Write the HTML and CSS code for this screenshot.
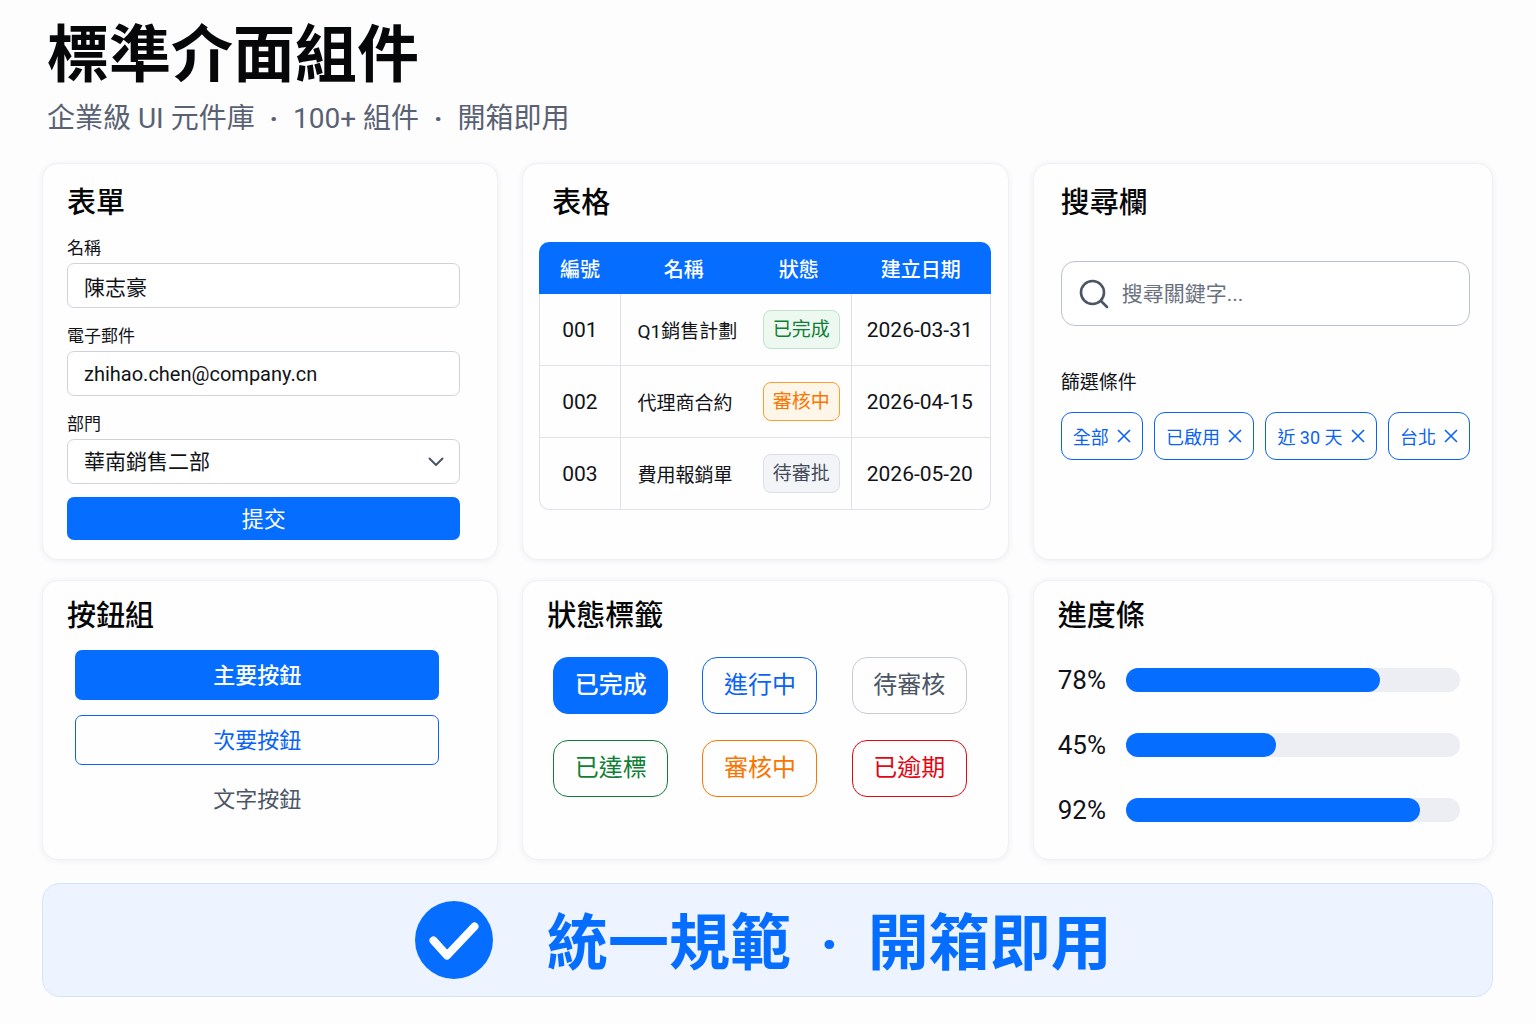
FILE: index.html
```html
<!DOCTYPE html>
<html lang="zh-Hant">
<head>
    <meta charset="UTF-8">
    <meta name="viewport" content="width=device-width, initial-scale=1.0">
    <title>標準介面組件</title>
    <link rel="stylesheet" href="styles.css">
</head>
<body>
    <header class="page-header">
        <h1>標準介面組件</h1>
        <p>企業級 UI 元件庫 <span class="dot">·</span> 100+ 組件 <span class="dot">·</span> 開箱即用</p>
    </header>

    <main class="grid">
        <section class="card">
            <h2>表單</h2>
            <form class="form">
                <div class="field">
                    <label for="name">名稱</label>
                    <input type="text" id="name" value="陳志豪">
                </div>
                <div class="field">
                    <label for="email">電子郵件</label>
                    <input type="email" id="email" value="zhihao.chen@company.cn">
                </div>
                <div class="field">
                    <label for="dept">部門</label>
                    <div class="select">
                        <select id="dept">
                            <option>華南銷售二部</option>
                        </select>
                        <svg width="16" height="10" viewBox="0 0 16 10" fill="none" stroke="#4b5565" stroke-width="2" stroke-linecap="round" stroke-linejoin="round"><path d="M1.5 1.5 8 8l6.5-6.5"/></svg>
                    </div>
                </div>
                <button type="button" class="btn btn-primary btn-submit">提交</button>
            </form>
        </section>

        <section class="card card-table">
            <h2>表格</h2>
            <table>
                <thead>
                    <tr>
                        <th class="col-id">編號</th>
                        <th class="col-name">名稱</th>
                        <th class="col-status">狀態</th>
                        <th class="col-date">建立日期</th>
                    </tr>
                </thead>
                <tbody>
                    <tr>
                        <td>001</td>
                        <td>Q1銷售計劃</td>
                        <td><span class="badge badge-green">已完成</span></td>
                        <td>2026-03-31</td>
                    </tr>
                    <tr>
                        <td>002</td>
                        <td>代理商合約</td>
                        <td><span class="badge badge-orange">審核中</span></td>
                        <td>2026-04-15</td>
                    </tr>
                    <tr>
                        <td>003</td>
                        <td>費用報銷單</td>
                        <td><span class="badge badge-gray">待審批</span></td>
                        <td>2026-05-20</td>
                    </tr>
                </tbody>
            </table>
        </section>

        <section class="card card-search">
            <h2>搜尋欄</h2>
            <label class="search">
                <svg width="30" height="30" viewBox="0 0 30 30" fill="none" stroke="#4b5565" stroke-width="2.6" stroke-linecap="round"><circle cx="13.5" cy="13.5" r="11.5"/><path d="m22 22 6 6"/></svg>
                <input type="search" placeholder="搜尋關鍵字..." aria-label="搜尋關鍵字">
            </label>
            <h3>篩選條件</h3>
            <div class="chips">
                <button type="button" class="chip">全部 <svg viewBox="0 0 14 14"><path d="m1 1 12 12M13 1 1 13"/></svg></button>
                <button type="button" class="chip">已啟用 <svg viewBox="0 0 14 14"><path d="m1 1 12 12M13 1 1 13"/></svg></button>
                <button type="button" class="chip">近 30 天 <svg viewBox="0 0 14 14"><path d="m1 1 12 12M13 1 1 13"/></svg></button>
                <button type="button" class="chip">台北 <svg viewBox="0 0 14 14"><path d="m1 1 12 12M13 1 1 13"/></svg></button>
            </div>
        </section>

        <section class="card card-low">
            <h2>按鈕組</h2>
            <div class="buttons">
                <button type="button" class="btn btn-primary">主要按鈕</button>
                <button type="button" class="btn btn-outline">次要按鈕</button>
                <button type="button" class="btn btn-text">文字按鈕</button>
            </div>
        </section>

        <section class="card card-low">
            <h2>狀態標籤</h2>
            <div class="tags">
                <span class="tag tag-solid">已完成</span>
                <span class="tag tag-blue">進行中</span>
                <span class="tag tag-gray">待審核</span>
                <span class="tag tag-green">已達標</span>
                <span class="tag tag-orange">審核中</span>
                <span class="tag tag-red">已逾期</span>
            </div>
        </section>

        <section class="card card-low">
            <h2>進度條</h2>
            <div class="progress-list">
                <div class="progress">
                    <span>78%</span>
                    <div class="track"><div class="bar" style="width: 76%"></div></div>
                </div>
                <div class="progress">
                    <span>45%</span>
                    <div class="track"><div class="bar" style="width: 45%"></div></div>
                </div>
                <div class="progress">
                    <span>92%</span>
                    <div class="track"><div class="bar" style="width: 88%"></div></div>
                </div>
            </div>
        </section>
    </main>

    <footer class="banner">
        <svg width="78" height="78" viewBox="0 0 78 78" fill="none"><circle cx="39" cy="39" r="39" fill="#056dff"/><path d="m18.5 39.5 13.5 15 27.5-29" stroke="#fff" stroke-width="8" stroke-linecap="round" stroke-linejoin="round"/></svg>
        <p>統一規範 <span class="dot">·</span> 開箱即用</p>
    </footer>
</body>
</html>
```

FILE: styles.css
```css
* {
    box-sizing: border-box;
}

body {
    margin: 0;
    padding: 20px 43px 26px 42px;
    background: #fdfdfe;
    color: #111318;
    font-family: Roboto, 'Noto Sans CJK TC', sans-serif;
}

h1, h2, h3, p {
    margin: 0;
}

input, select, button {
    font-family: inherit;
    color: inherit;
}

.page-header {
    padding-left: 5px;
    margin-bottom: 26px;
}

h1 {
    font-size: 62px;
    line-height: 72px;
    font-weight: 700;
    color: #060708;
}

.page-header p {
    margin-top: 9px;
    font-size: 28px;
    line-height: 36px;
    color: #596173;
}

.page-header .dot {
    margin: 0 8px;
    font-weight: 700;
}

.grid {
    display: grid;
    grid-template-columns: 456fr 486fr 460fr;
    gap: 20px 24px;
}

.card {
    padding: 19px 37px 19px 24px;
    background: #fefefe;
    border: 1px solid #f0f1f5;
    border-radius: 16px;
    box-shadow: 0 1px 6px rgba(30, 40, 80, 0.07);
}

h2 {
    font-size: 29px;
    line-height: 40px;
    font-weight: 500;
    color: #060708;
}

/* 表單 */
.form {
    display: flex;
    flex-direction: column;
    gap: 13px;
    margin-top: 10px;
}

label {
    display: block;
    font-size: 17px;
    line-height: 30px;
}

.field input,
.field select {
    display: block;
    width: 100%;
    height: 45px;
    padding: 0 16px;
    border: 1px solid #ced3de;
    border-radius: 7px;
    background: #fff;
    font-size: 21px;
    appearance: none;
}

.field input[type="email"] {
    font-size: 20px;
}

.select {
    display: grid;
    align-items: center;
}

.select select,
.select svg {
    grid-area: 1 / 1;
}

.select svg {
    justify-self: end;
    margin-right: 16px;
    pointer-events: none;
}

.btn {
    height: 50px;
    padding: 0 0 4px;
    border: 1px solid transparent;
    border-radius: 7px;
    background: none;
    font-size: 22px;
    cursor: pointer;
}

.btn-primary {
    background: #056dff;
    color: #fff;
    font-weight: 500;
}

.btn-submit {
    height: 43px;
    font-weight: 400;
}

.btn-outline {
    border-color: #0a63f5;
    color: #0a63f5;
}

.btn-text {
    height: 38px;
    color: #4b5565;
}

/* 表格 */
.card-table {
    padding: 19px 17px 19px 16px;
}

.card-table h2 {
    padding-left: 13px;
}

table {
    width: 100%;
    margin-top: 19px;
    border-collapse: separate;
    border-spacing: 0;
    table-layout: fixed;
    font-size: 21px;
}

th {
    height: 52px;
    padding: 0;
    background: #056dff;
    color: #fff;
    font-size: 20px;
    font-weight: 500;
}

th:first-child {
    border-top-left-radius: 10px;
}

th:last-child {
    border-top-right-radius: 10px;
}

.col-id {
    width: 18%;
}

.col-name {
    width: 28%;
}

.col-status {
    width: 23%;
}

td {
    height: 72px;
    padding: 0;
    border-bottom: 1px solid #dfe2e9;
    text-align: center;
    white-space: nowrap;
}

td:first-child {
    border-left: 1px solid #dfe2e9;
    border-right: 1px solid #dfe2e9;
}

td:nth-child(2) {
    padding-left: 17px;
    font-size: 19px;
    text-align: left;
}

td:nth-child(3) {
    padding-left: 5px;
}

td:last-child {
    padding-left: 15px;
    border-left: 1px solid #dfe2e9;
    border-right: 1px solid #dfe2e9;
    text-align: left;
}

tr:last-child td:first-child {
    border-bottom-left-radius: 10px;
}

tr:last-child td:last-child {
    border-bottom-right-radius: 10px;
}

.badge {
    display: inline-block;
    padding: 0 9px;
    border: 1px solid;
    border-radius: 8px;
    font-size: 19px;
    line-height: 37px;
}

.badge-green {
    background: #edf8f1;
    border-color: #bfe3cd;
    color: #0f7f35;
}

.badge-orange {
    background: #fff6ea;
    border-color: #ff9d2e;
    color: #fa7500;
}

.badge-gray {
    background: #f3f4f7;
    border-color: #dcdfe7;
    color: #434a59;
}

/* 搜尋欄 */
.card-search {
    padding: 19px 22px 19px 27px;
}

.search {
    display: flex;
    align-items: center;
    gap: 13px;
    height: 65px;
    margin-top: 38px;
    padding: 0 17px;
    border: 1px solid #bac1d1;
    border-radius: 14px;
    background: #fff;
}

.search input {
    flex: 1;
    min-width: 0;
    padding: 0;
    border: none;
    outline: none;
    background: none;
    font-size: 21px;
}

.search input::placeholder {
    color: #6a7180;
}

h3 {
    margin-top: 42px;
    font-size: 19px;
    line-height: 30px;
    font-weight: 400;
}

.chips {
    display: flex;
    justify-content: space-between;
    margin-top: 14px;
}

.chip {
    display: flex;
    align-items: center;
    gap: 8px;
    height: 48px;
    padding: 0 11px;
    border: 1px solid #0a63f5;
    border-radius: 11px;
    background: #fff;
    color: #0a63f5;
    font-size: 18px;
    white-space: nowrap;
    cursor: pointer;
}

.chip svg {
    width: 14px;
    height: 14px;
    stroke: #0a63f5;
    stroke-width: 1.6;
}

/* 下排卡片 */
.card-low {
    padding: 15px 32px 34px 24px;
}

.buttons {
    display: flex;
    flex-direction: column;
    gap: 15px;
    margin: 14px 26px 0 8px;
}

.tags {
    display: grid;
    grid-template-columns: repeat(3, 115px);
    justify-content: space-between;
    gap: 26px;
    margin: 21px 9px 0 6px;
}

.tag {
    border: 1px solid;
    border-radius: 15px;
    font-size: 24px;
    line-height: 55px;
    text-align: center;
}

.tag-solid {
    background: #056dff;
    border-color: #056dff;
    color: #fff;
    font-weight: 500;
}

.tag-blue {
    color: #0a63f5;
}

.tag-gray {
    border-color: #c6cbd6;
    color: #4b5565;
}

.tag-green {
    color: #0f7f35;
}

.tag-orange {
    color: #fa7500;
}

.tag-red {
    color: #e30613;
}

.progress-list {
    display: flex;
    flex-direction: column;
    gap: 35px;
    margin-top: 29px;
}

.progress {
    display: grid;
    grid-template-columns: 50px 1fr;
    align-items: center;
    gap: 18px;
    font-size: 26px;
    line-height: 30px;
}

.track {
    height: 24px;
    border-radius: 12px;
    background: #edeef3;
}

.bar {
    height: 100%;
    border-radius: 12px;
    background: #056dff;
}

.banner {
    display: flex;
    justify-content: center;
    align-items: center;
    gap: 54px;
    margin-top: 23px;
    padding: 16px 8px 16px 0;
    border: 1px solid #d3e3fb;
    border-radius: 18px;
    background: #eef4ff;
}

.banner p {
    padding-top: 8px;
    font-size: 61px;
    line-height: 72px;
    font-weight: 700;
    color: #056dff;
}

.banner .dot {
    margin: 0 14px;
}
```
